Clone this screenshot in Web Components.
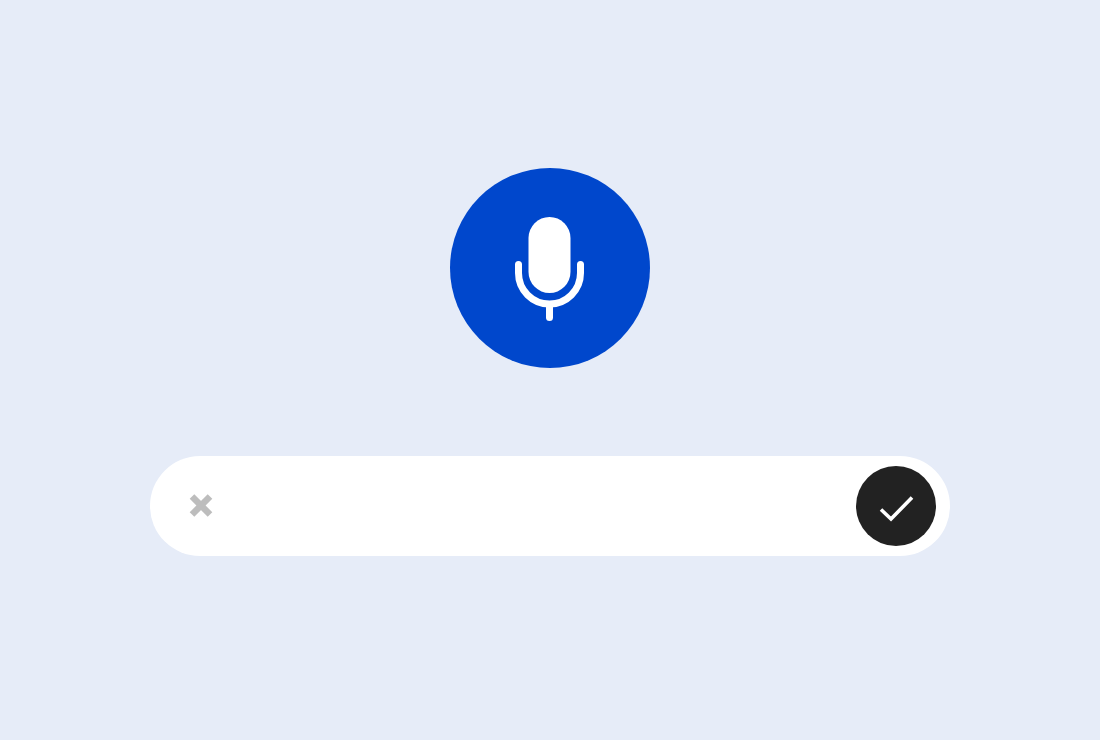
<!DOCTYPE html>
<html>
<head>
<meta charset="utf-8">
<title>Voice input</title>
<style>
  html, body { margin: 0; height: 100%; }
  body { background: #e6ecf8; font-family: "Liberation Sans", sans-serif; }
</style>
</head>
<body>
<voice-page>
  <mic-button></mic-button>
  <voice-bar></voice-bar>
</voice-page>

<script>
// page layout
class VoicePage extends HTMLElement {
    constructor() {
        super();
        this.attachShadow({ mode: 'open' });
        this.shadowRoot.innerHTML = `
        <style>
            :host {
                display: flex;
                flex-direction: column;
                align-items: center;
                gap: 88px;
                padding-top: 168px;
            }
        </style>
        <slot></slot>`;
    }
}
customElements.define('voice-page', VoicePage);

// big blue microphone
class MicButton extends HTMLElement {
    constructor() {
        super();
        this.attachShadow({ mode: 'open' });
        this.shadowRoot.innerHTML = `
        <style>
            :host {
                display: flex;
                align-items: center;
                justify-content: center;
                width: 200px;
                height: 200px;
                border-radius: 50%;
                background: #0047cc;
            }
            svg { display: block; }
        </style>
        <svg width="200" height="200" viewBox="0 0 200 200" fill="none">
            <rect x="78.500" y="49" width="42" height="76" rx="21" fill="#fff"/>
            <path d="M68.500 96.500V105A31 31 0 0 0 130.500 105V96.500" stroke="#fff" stroke-width="7" stroke-linecap="round"/>
            <path d="M99.500 137V149.500" stroke="#fff" stroke-width="7" stroke-linecap="round"/>
        </svg>`;
    }
}
customElements.define('mic-button', MicButton);

// white bar with cancel and confirm
class VoiceBar extends HTMLElement {
    constructor() {
        super();
        this.attachShadow({ mode: 'open' });
        this.shadowRoot.innerHTML = `
        <style>
            :host {
                display: flex;
                align-items: center;
                justify-content: space-between;
                box-sizing: border-box;
                width: 800px;
                height: 100px;
                padding: 0 14px 0 39px;
                border-radius: 50px;
                background: #fff;
            }
            .confirm {
                display: flex;
                align-items: center;
                justify-content: center;
                width: 80px;
                height: 80px;
                border-radius: 50%;
                background: #222;
            }
            svg { display: block; }
        </style>
        <svg width="24" height="24" viewBox="0 0 24 24" fill="none">
            <path d="M3 2.500L21 20.500M21 2.500L3 20.500" stroke="#bdbdbd" stroke-width="6.500"/>
        </svg>
        <div class="confirm">
            <svg width="80" height="80" viewBox="0 0 80 80" fill="none">
                <path d="M25 43.500L35 53L56 31.500" stroke="#fff" stroke-width="3.600"/>
            </svg>
        </div>`;
    }
}
customElements.define('voice-bar', VoiceBar);
</script>
</body>
</html>
